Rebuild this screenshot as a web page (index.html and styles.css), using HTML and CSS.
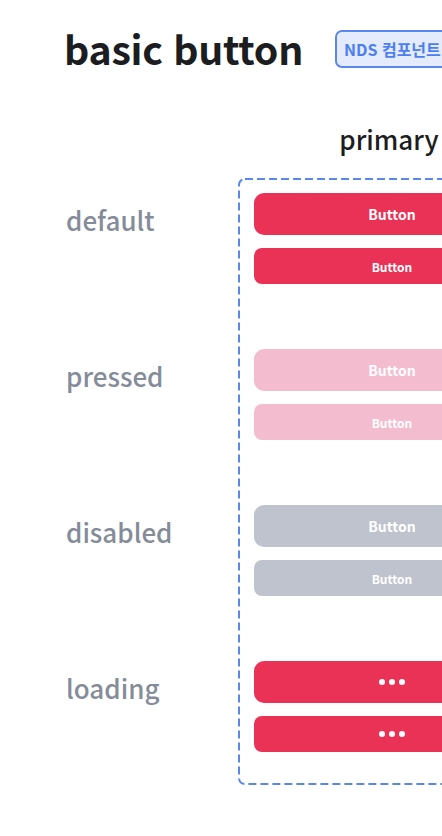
FILE: index.html
```html
<!DOCTYPE html>
<html lang="ko">
<head>
    <meta charset="UTF-8">
    <meta name="viewport" content="width=device-width, initial-scale=1.0">
    <title>basic button</title>
    <link rel="stylesheet" href="styles.css">
</head>
<body>
    <div class="page">
        <div class="title-row">
            <h1>basic button</h1>
            <span class="badge">NDS 컴포넌트</span>
        </div>

        <div class="board">
            <div class="col-head">primary</div>
            <div class="frame">
                <svg class="frame-line"><rect></rect></svg>
            </div>

            <div class="state state-1">default</div>
            <div class="group group-1">
                <button class="btn btn-lg">Button</button>
                <button class="btn btn-sm">Button</button>
            </div>

            <div class="state state-2">pressed</div>
            <div class="group group-2">
                <button class="btn btn-lg pressed">Button</button>
                <button class="btn btn-sm pressed">Button</button>
            </div>

            <div class="state state-3">disabled</div>
            <div class="group group-3">
                <button class="btn btn-lg disabled">Button</button>
                <button class="btn btn-sm disabled">Button</button>
            </div>

            <div class="state state-4">loading</div>
            <div class="group group-4 last">
                <button class="btn btn-lg"><span class="dots"><i></i><i></i><i></i></span></button>
                <button class="btn btn-sm"><span class="dots"><i></i><i></i><i></i></span></button>
            </div>
        </div>
    </div>
</body>
</html>
```

FILE: styles.css
```css
:root {
    --primary: #e93255;
    --pressed: #f4bccf;
    --disabled: #bec3ce;
    --label: #858c99;
    --text: #1b1d21;
    --blue: #5a87ec;
}

html, body {
    margin: 0;
    overflow: hidden;
    background: #ffffff;
}

body {
    font-family: "Noto Sans CJK KR", "Noto Sans", sans-serif;
    color: var(--text);
}

.page {
    width: 600px;
    padding: 22px 0 0 66px;
}

.title-row {
    display: flex;
    align-items: center;
    gap: 32px;
    height: 52px;
}

h1 {
    margin: 0 0 0 -2px;
    font-size: 39.3px;
    font-weight: 700;
    line-height: 52px;
    letter-spacing: -0.3px;
}

.badge {
    display: inline-flex;
    align-items: center;
    box-sizing: border-box;
    height: 38px;
    margin-top: 2px;
    padding: 0 12px 0 7px;
    border: 2px solid var(--blue);
    border-radius: 7px;
    background: #e3ebfd;
    color: #4d7ef0;
    font-size: 16px;
    font-weight: 700;
    white-space: nowrap;
}

.board {
    display: grid;
    grid-template-columns: 172px 308px;
    margin-top: 47px;
}

.col-head {
    grid-column: 2;
    grid-row: 1;
    padding-right: 6px;
    text-align: center;
    font-size: 26px;
    font-weight: 500;
    line-height: 36px;
    margin-bottom: 21px;
}

.frame {
    grid-column: 2;
    grid-row: 2 / 6;
}

.frame-line {
    display: block;
    width: 100%;
    height: 100%;
}

.frame-line rect {
    x: 1px;
    y: 1px;
    width: calc(100% - 2px);
    height: calc(100% - 2px);
    rx: 6px;
    fill: none;
    stroke: var(--blue);
    stroke-width: 2;
    stroke-dasharray: 8 4;
}

.state {
    grid-column: 1;
    align-self: start;
    margin-top: 24px;
    font-size: 26px;
    font-weight: 500;
    line-height: 36px;
    color: var(--label);
}

.state-1, .group-1 { grid-row: 2; }
.state-2, .group-2 { grid-row: 3; }
.state-3, .group-3 { grid-row: 4; }
.state-4, .group-4 { grid-row: 5; }

.group {
    grid-column: 2;
    display: flex;
    flex-direction: column;
    gap: 13px;
    padding: 15px 16px 50px;
}

.group.last {
    padding-bottom: 33px;
}

.btn {
    display: flex;
    align-items: center;
    justify-content: center;
    border: none;
    margin: 0;
    padding: 0;
    width: 100%;
    background: var(--primary);
    color: #ffffff;
    font-family: inherit;
    font-weight: 700;
}

.btn-lg {
    height: 42px;
    border-radius: 10px;
    font-size: 14px;
}

.btn-sm {
    height: 36px;
    border-radius: 8px;
    font-size: 12px;
}

.btn.pressed {
    background: var(--pressed);
}

.btn.disabled {
    background: var(--disabled);
}

.dots {
    display: flex;
    gap: 4px;
}

.dots i {
    width: 6px;
    height: 6px;
    border-radius: 50%;
    background: #ffffff;
}
```
